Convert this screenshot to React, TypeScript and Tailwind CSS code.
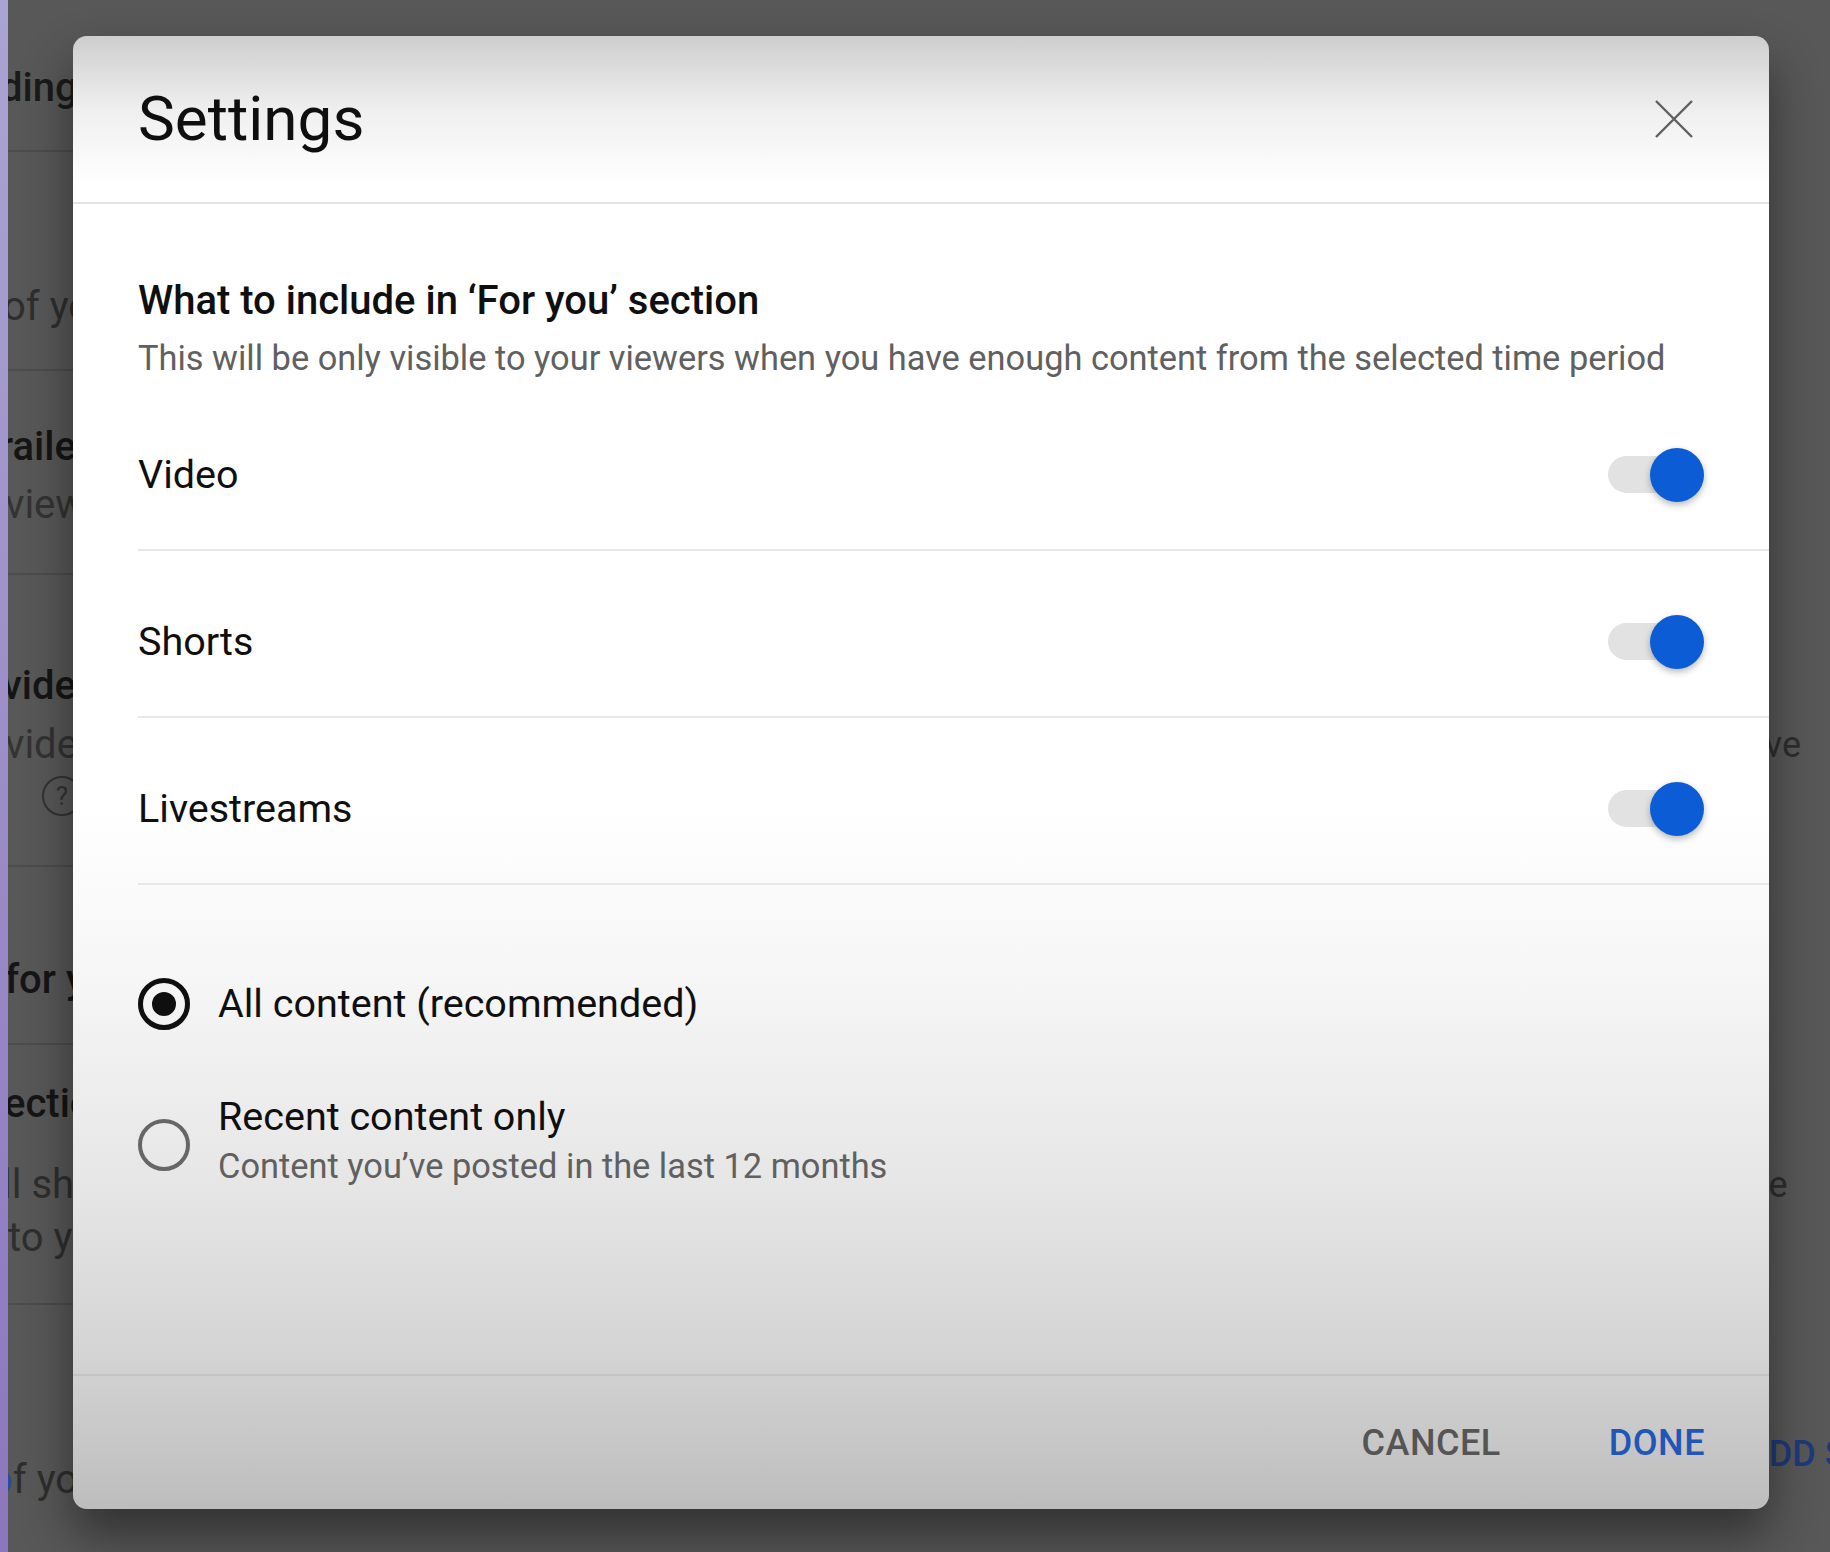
import { useState } from "react";

const contentTypes = ["Video", "Shorts", "Livestreams"];

function Toggle({ on, onClick }: { on: boolean; onClick: () => void }) {
  return (
    <button onClick={onClick} className="relative flex h-[54px] w-[96px] items-center">
      <span className="h-[37px] w-[82px] rounded-full bg-[#e2e2e2]" />
      <span
        className={
          on
            ? "absolute right-0 top-0 h-[54px] w-[54px] rounded-full bg-[#0b5cd5] shadow-[0_3px_7px_rgba(0,0,0,0.28)]"
            : "absolute left-0 top-0 h-[54px] w-[54px] rounded-full bg-[#f1f1f1] shadow-[0_3px_7px_rgba(0,0,0,0.28)]"
        }
      />
    </button>
  );
}

function Radio({ checked }: { checked: boolean }) {
  if (checked) {
    return (
      <span className="flex h-[52px] w-[52px] shrink-0 items-center justify-center rounded-full border-[5px] border-[#0f0f0f]">
        <span className="h-[24px] w-[24px] rounded-full bg-[#0f0f0f]" />
      </span>
    );
  }
  return <span className="mt-[26px] h-[52px] w-[52px] shrink-0 rounded-full border-[4px] border-[#666666]" />;
}

function CloseIcon() {
  return (
    <svg width="40" height="40" viewBox="0 0 40 40" fill="none" stroke="#5f5f5f" strokeWidth="2.4">
      <path d="M2 2 L38 38 M38 2 L2 38" />
    </svg>
  );
}

// the page behind the dim overlay, only slivers of it show
function Background() {
  return (
    <div className="flex h-full w-full">
      <div className="h-full w-[8px] bg-gradient-to-b from-[#aaa4d2] to-[#8c76bd]" />
      <div className="flex w-[560px] flex-col overflow-hidden whitespace-nowrap text-[40px] leading-[46px]">
        <div className="h-[152px] shrink-0 border-b-2 border-[#4c4c4c] pt-[65px]">
          <p className="-ml-[8px] font-medium text-[#1a1a1a]">ding</p>
        </div>
        <div className="h-[219px] shrink-0 border-b-2 border-[#4c4c4c] pt-[132px]">
          <p className="-ml-[5px] text-[#2e2e2e]">of your</p>
        </div>
        <div className="h-[204px] shrink-0 border-b-2 border-[#4c4c4c] pt-[53px]">
          <p className="-ml-[9px] font-medium text-[#151515]">railer</p>
          <p className="mt-[12px] -ml-[3px] text-[#333333]">viewers</p>
        </div>
        <div className="h-[292px] shrink-0 border-b-2 border-[#4c4c4c] pt-[88px]">
          <p className="-ml-[6px] font-medium text-[#151515]">video</p>
          <p className="mt-[13px] -ml-[3px] text-[#333333]">video</p>
          <span className="mt-[8px] ml-[34px] flex h-[40px] w-[40px] items-center justify-center rounded-full border-2 border-[#333333] text-[26px] leading-none text-[#333333]">
            ?
          </span>
        </div>
        <div className="h-[178px] shrink-0 border-b-2 border-[#4c4c4c] pt-[90px]">
          <p className="-ml-[3px] font-medium text-[#151515]">for you</p>
        </div>
        <div className="h-[260px] shrink-0 border-b-2 border-[#4c4c4c] pt-[36px]">
          <p className="-ml-[4px] font-medium text-[#151515]">ections</p>
          <p className="mt-[35px] -ml-[6px] text-[#2e2e2e]">ll show</p>
          <p className="mt-[7px] text-[#2e2e2e]">to your</p>
        </div>
        <div className="pt-[152px]">
          <p className="-ml-[18px] text-[#2e2e2e]">
            <span className="text-[#2b4c9a]">o</span>f your
          </p>
        </div>
      </div>
      <div className="ml-auto flex w-[200px] flex-col items-start overflow-hidden whitespace-nowrap text-[36px] leading-[44px]">
        <p className="mt-[723px] ml-[94px] text-[#2e2e2e]">Save</p>
        <p className="mt-[396px] ml-[90px] text-[#2e2e2e]">able</p>
        <p className="mt-[225px] ml-[115px] font-medium text-[#1e3a7a]">ADD SECTION</p>
      </div>
    </div>
  );
}

export default function App() {
  const [enabled, setEnabled] = useState([true, true, true]);
  const [mode, setMode] = useState<"all" | "recent">("all");

  return (
    <div className="relative h-[1552px] w-[1830px] overflow-hidden bg-[#585858] font-['Roboto',sans-serif]">
      <Background />

      {/* Dialog overlay */}
      <div className="absolute left-[73px] top-[36px] flex h-[1473px] w-[1696px] flex-col overflow-hidden rounded-[14px] bg-[linear-gradient(to_bottom,#cecece_0%,#efefef_5%,#ffffff_10%,#ffffff_52%,#f6f6f6_64%,#e6e6e6_78%,#d3d3d3_90%,#bdbdbd_100%)] shadow-[0_26px_50px_rgba(0,0,0,0.45)]">
        <div className="flex h-[168px] shrink-0 items-center justify-between border-b-2 border-[#e4e4e4] pl-[65px] pr-[75px]">
          <h1 className="text-[62px] leading-[76px] text-[#0f0f0f]">Settings</h1>
          <button>
            <CloseIcon />
          </button>
        </div>

        <div className="flex flex-1 flex-col pl-[65px] pt-[74px]">
          <h2 className="text-[40px] font-medium leading-[46px] text-[#0f0f0f]">
            What to include in ‘For you’ section
          </h2>
          <p className="mt-[14px] text-[34.4px] leading-[40px] text-[#606060]">
            This will be only visible to your viewers when you have enough content from the selected time period
          </p>

          <div className="mt-[6px] flex flex-col">
            {contentTypes.map((label, i) => (
              <div
                key={label}
                className="flex h-[167px] items-center justify-between border-b-2 border-[#e8e8e8] pr-[65px] pt-[16px]"
              >
                <span className="text-[39.5px] leading-[48px] text-[#0f0f0f]">{label}</span>
                <Toggle
                  on={enabled[i]}
                  onClick={() => setEnabled(enabled.map((v, j) => (j === i ? !v : v)))}
                />
              </div>
            ))}
          </div>

          <div className="mt-[89px] flex flex-col">
            <button onClick={() => setMode("all")} className="flex h-[60px] items-center gap-[28px] text-left">
              <Radio checked={mode === "all"} />
              <span className="text-[39.5px] leading-[48px] text-[#0f0f0f]">All content (recommended)</span>
            </button>
            <button onClick={() => setMode("recent")} className="mt-[59px] flex items-start gap-[28px] text-left">
              <Radio checked={mode === "recent"} />
              <span className="flex flex-col">
                <span className="text-[39.5px] leading-[48px] text-[#0f0f0f]">Recent content only</span>
                <span className="mt-[3px] text-[34.4px] leading-[44px] text-[#606060]">
                  Content you’ve posted in the last 12 months
                </span>
              </span>
            </button>
          </div>
        </div>

        <div className="flex h-[135px] shrink-0 items-center justify-end gap-[108px] border-t-2 border-[#c4c4c4] pr-[64px]">
          <button className="text-[36px] font-medium tracking-[0.5px] text-[#555555]">CANCEL</button>
          <button className="text-[36px] font-medium tracking-[0.5px] text-[#1f56b8]">DONE</button>
        </div>
      </div>
    </div>
  );
}
